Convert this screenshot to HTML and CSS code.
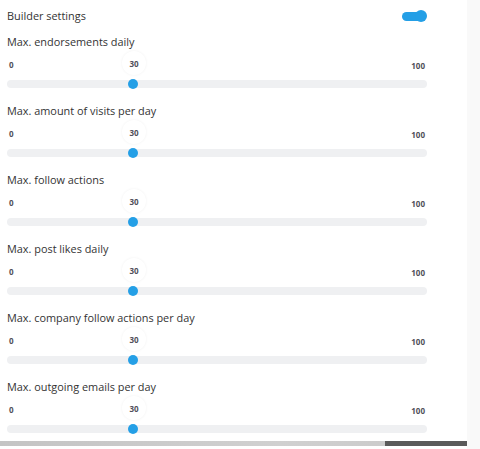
FILE: index.html
```html
<!DOCTYPE html>
<html>
<head>
<meta charset="utf-8">
<link rel="stylesheet" href="styles.css">
</head>
<body>
<div class="panel">
  <div class="header">
    <span class="title">Builder settings</span>
    <span class="toggle"></span>
  </div>

  <div class="setting">
    <div class="label">Max. endorsements daily</div>
    <div class="nums"><span>0</span><span class="bubble">30</span><span>100</span></div>
    <div class="track"><span class="thumb"></span></div>
  </div>

  <div class="setting">
    <div class="label">Max. amount of visits per day</div>
    <div class="nums"><span>0</span><span class="bubble">30</span><span>100</span></div>
    <div class="track"><span class="thumb"></span></div>
  </div>

  <div class="setting">
    <div class="label">Max. follow actions</div>
    <div class="nums"><span>0</span><span class="bubble">30</span><span>100</span></div>
    <div class="track"><span class="thumb"></span></div>
  </div>

  <div class="setting">
    <div class="label">Max. post likes daily</div>
    <div class="nums"><span>0</span><span class="bubble">30</span><span>100</span></div>
    <div class="track"><span class="thumb"></span></div>
  </div>

  <div class="setting">
    <div class="label">Max. company follow actions per day</div>
    <div class="nums"><span>0</span><span class="bubble">30</span><span>100</span></div>
    <div class="track"><span class="thumb"></span></div>
  </div>

  <div class="setting">
    <div class="label">Max. outgoing emails per day</div>
    <div class="nums"><span>0</span><span class="bubble">30</span><span>100</span></div>
    <div class="track"><span class="thumb"></span></div>
  </div>
</div>
<div class="hscroll"><span class="hscroll-thumb"></span></div>
</body>
</html>
```

FILE: styles.css
```css
html, body {
  margin: 0;
  padding: 0;
  height: 449px;
  overflow: hidden;
}
body {
  background: #f9f9f9;
  font-family: "Open Sans", "Noto Sans", sans-serif;
  color: #333;
}
.panel {
  width: 460px;
  height: 449px;
  background: #fff;
  padding-left: 7px;
}
.header {
  width: 420px;
  height: 32px;
  display: flex;
  align-items: center;
  justify-content: space-between;
  margin-bottom: 2px;
}
.title, .label {
  font-size: 10.9px;
  line-height: 16px;
}
.toggle {
  position: relative;
  width: 24px;
  height: 9px;
  border-radius: 5px;
  background: #249fe6;
  margin-right: 1px;
}
.toggle::after {
  content: "";
  position: absolute;
  right: -1px;
  top: -2px;
  width: 12px;
  height: 12px;
  border-radius: 50%;
  background: #249fe6;
}
.setting {
  width: 420px;
  margin-bottom: 15px;
}
.label {
  height: 16px;
}
.nums {
  position: relative;
  display: flex;
  justify-content: space-between;
  align-items: center;
  height: 16px;
  margin-top: 6px;
  padding: 0 2px;
  font-size: 8px;
  font-weight: 700;
  color: #50505a;
}
.nums span:last-child {
  margin-top: 2px;
}
.bubble {
  position: absolute;
  left: calc(30% - 11px);
  top: -5px;
  width: 24px;
  height: 24px;
  border-radius: 50%;
  background: #fff;
  box-shadow: 0 0 3px rgba(0, 0, 0, 0.06);
  display: flex;
  align-items: center;
  justify-content: center;
}
.track {
  position: relative;
  height: 8px;
  margin-top: 8px;
  border-radius: 4px;
  background: #eff0f2;
}
.thumb {
  position: absolute;
  left: calc(30% - 5px);
  top: -1px;
  width: 10px;
  height: 10px;
  border-radius: 50%;
  background: #249fe6;
}
.hscroll {
  position: fixed;
  left: 0;
  top: 441px;
  width: 467px;
  height: 5px;
  background: linear-gradient(to right, #c4c4c4, #d0d0d0 60%, #c8c8c8);
  display: flex;
  justify-content: flex-end;
}
.hscroll-thumb {
  width: 82px;
  height: 5px;
  background: #5a5a5a;
}
```
